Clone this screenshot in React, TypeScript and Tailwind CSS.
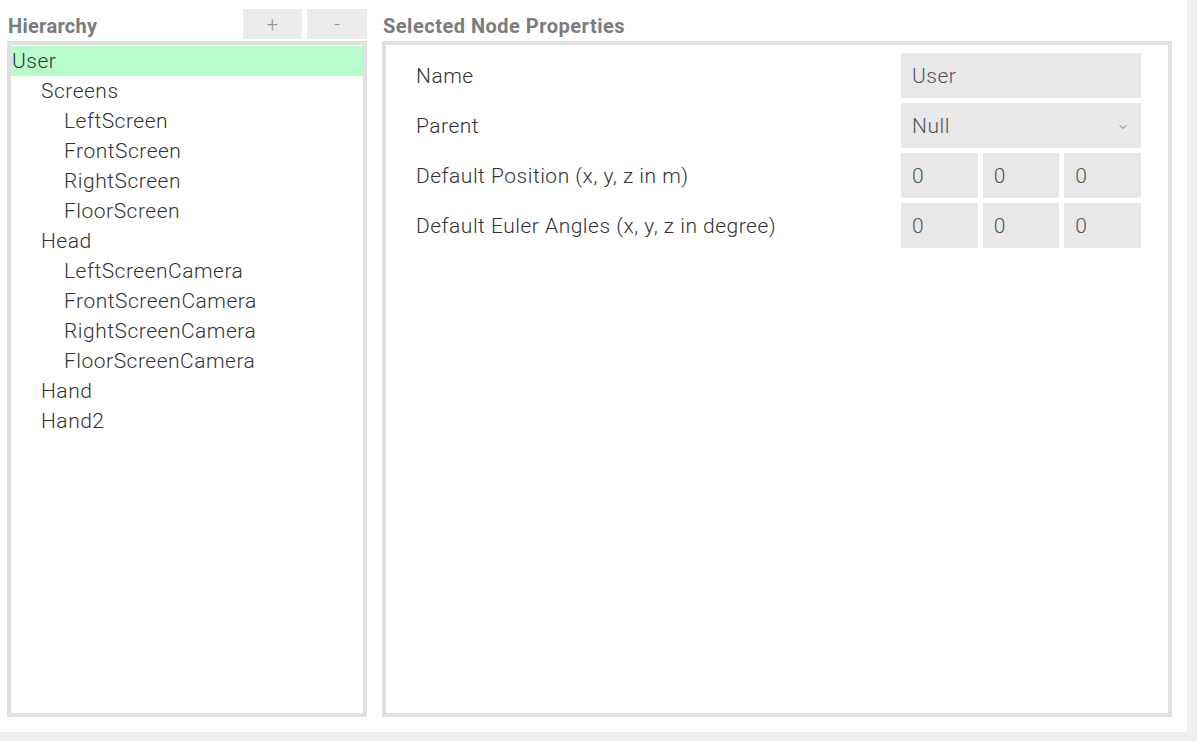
import { ChevronDown } from "lucide-react";

interface TreeNode {
    name: string;
    level: 0 | 1 | 2;
}

const nodes: TreeNode[] = [
    { name: "User", level: 0 },
    { name: "Screens", level: 1 },
    { name: "LeftScreen", level: 2 },
    { name: "FrontScreen", level: 2 },
    { name: "RightScreen", level: 2 },
    { name: "FloorScreen", level: 2 },
    { name: "Head", level: 1 },
    { name: "LeftScreenCamera", level: 2 },
    { name: "FrontScreenCamera", level: 2 },
    { name: "RightScreenCamera", level: 2 },
    { name: "FloorScreenCamera", level: 2 },
    { name: "Hand", level: 1 },
    { name: "Hand2", level: 1 },
];

const indent = ["pl-[1px]", "pl-[30px]", "pl-[53px]"];

function Field({ value }: { value: string }) {
    return (
        <div className="h-[45px] flex-1 bg-[#e8e8e8] px-[11px] pt-[3px] flex items-center text-[#555]">
            {value}
        </div>
    );
}

function Row({ label, children }: { label: string; children: React.ReactNode }) {
    return (
        <div className="flex items-center justify-between">
            <span className="text-[#333] pt-[3px]">{label}</span>
            <div className="w-[240px] flex gap-[5px]">{children}</div>
        </div>
    );
}

export default function App() {
    const selected = "User";

    return (
        <div className="w-[1197px] h-[741px] flex flex-col bg-white font-['Roboto',sans-serif] font-light text-[21px] tracking-[0.5px]">
            <div className="flex flex-1">
                <div className="flex-1 flex gap-[15px] pl-[7px] pr-[15px] pb-[15px]">
                    {/* hierarchy */}
                    <section className="w-[360px] flex flex-col">
                        <div className="h-[41px] flex items-end justify-between pb-[2px]">
                            <h2 className="text-[20px] leading-none font-bold text-[#7b7b7b] tracking-[0.3px] pl-[1px] pb-[3px]">Hierarchy</h2>
                            <div className="flex gap-[5px]">
                                <button className="w-[59px] h-[30px] bg-[#ebebeb] text-[#999] text-[20px] tracking-normal">+</button>
                                <button className="w-[60px] h-[30px] bg-[#ebebeb] text-[#999] text-[20px] tracking-normal">-</button>
                            </div>
                        </div>
                        <div className="flex-1 border-4 border-[#e0e0e0] pt-px">
                            {nodes.map((node) => (
                                <div
                                    key={node.name}
                                    className={`h-[30px] flex items-center pt-[2px] ${indent[node.level]} text-[#333] ${node.name === selected ? "bg-[#b8fccb]" : ""}`}
                                >
                                    {node.name}
                                </div>
                            ))}
                        </div>
                    </section>

                    {/* properties */}
                    <section className="flex-1 flex flex-col">
                        <div className="h-[41px] flex items-end pb-[5px]">
                            <h2 className="text-[20px] leading-none font-bold text-[#7b7b7b] tracking-[0.5px] pl-px">Selected Node Properties</h2>
                        </div>
                        <div className="flex-1 border-4 border-[#e0e0e0] pt-[8px] pl-[30px] pr-[27px] flex flex-col gap-[5px]">
                            <Row label="Name">
                                <Field value="User" />
                            </Row>
                            <Row label="Parent">
                                <div className="h-[45px] flex-1 bg-[#e8e8e8] pl-[11px] pr-[12px] pt-[3px] flex items-center justify-between text-[#555]">
                                    Null
                                    <ChevronDown size={12} strokeWidth={2} className="text-[#777]" />
                                </div>
                            </Row>
                            <Row label="Default Position (x, y, z in m)">
                                <Field value="0" />
                                <Field value="0" />
                                <Field value="0" />
                            </Row>
                            <Row label="Default Euler Angles (x, y, z in degree)">
                                <Field value="0" />
                                <Field value="0" />
                                <Field value="0" />
                            </Row>
                        </div>
                    </section>
                </div>
                <div className="w-[10px] bg-[#efefef]" />
            </div>
            <div className="h-[9px] bg-[#efefef]" />
        </div>
    );
}
